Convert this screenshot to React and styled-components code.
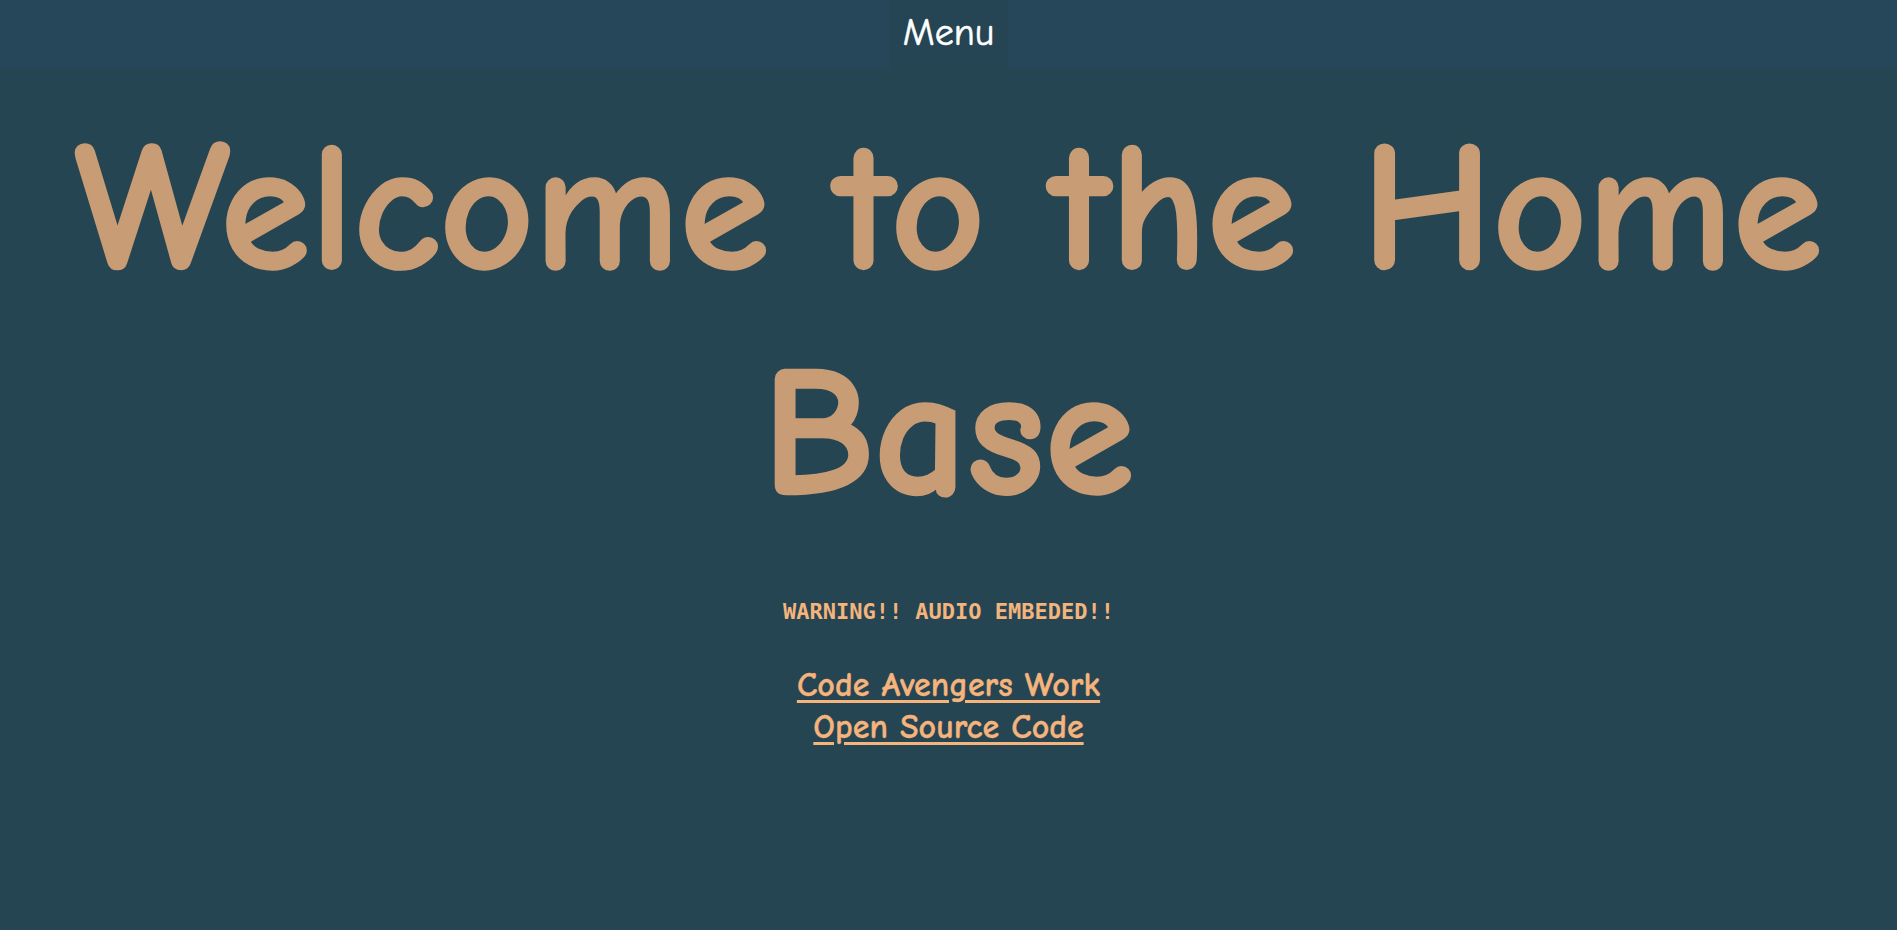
import React from "react"
import styled, { createGlobalStyle } from "styled-components"

const comic = `"Comic Sans MS", "Comic Neue", "Open Sans", "Noto Sans", sans-serif`

const GlobalStyle = createGlobalStyle`
  html, body {
    margin: 0;
    padding: 0;
    background-color: #264553;
    min-height: 100%;
  }
  body {
    font-family: ${comic};
  }
`

const Page = styled.div`
  min-height: 930px;
  background-color: #264553;
  text-align: center;
`

const NavBar = styled.nav`
  height: 68px;
  background-color: #264759;
  display: flex;
  justify-content: center;
`

const MenuButton = styled.button`
  width: 118px;
  height: 68px;
  padding: 0 0 2px;
  border: none;
  background-color: #254554;
  color: #ffffff;
  font-family: ${comic};
  font-size: 38px;
  -webkit-text-stroke: 0.6px #ffffff;
  cursor: pointer;
`

const Title = styled.h1`
  margin: 28px auto 0;
  max-width: 1800px;
  color: #c89c74;
  font-family: ${comic};
  font-weight: 700;
  font-size: 183px;
  line-height: 225px;
  -webkit-text-stroke: 2.5px #c89c74;
`

const Warning = styled.h3`
  margin: 53px 0 0;
  color: #f4b47c;
  font-family: "DejaVu Sans Mono", "Liberation Mono", monospace;
  font-weight: 700;
  font-size: 22px;
`

const Links = styled.div`
  margin-top: 40px;
  display: flex;
  flex-direction: column;
  align-items: center;
`

const Link = styled.a`
  color: #f4b47c;
  font-family: ${comic};
  font-weight: 700;
  font-size: 34px;
  line-height: 42px;
  text-decoration: underline;
  text-decoration-thickness: 3px;
  text-underline-offset: 4px;
  -webkit-text-stroke: 0.3px #f4b47c;
`

export default function App() {
  return (
    <>
      <GlobalStyle />
      <Page>
        <NavBar>
          <MenuButton>Menu</MenuButton>
        </NavBar>
        <Title>Welcome to the Home Base</Title>
        <Warning>WARNING!! AUDIO EMBEDED!!</Warning>
        <Links>
          <Link href="#">Code Avengers Work</Link>
          <Link href="#">Open Source Code</Link>
        </Links>
      </Page>
    </>
  )
}
